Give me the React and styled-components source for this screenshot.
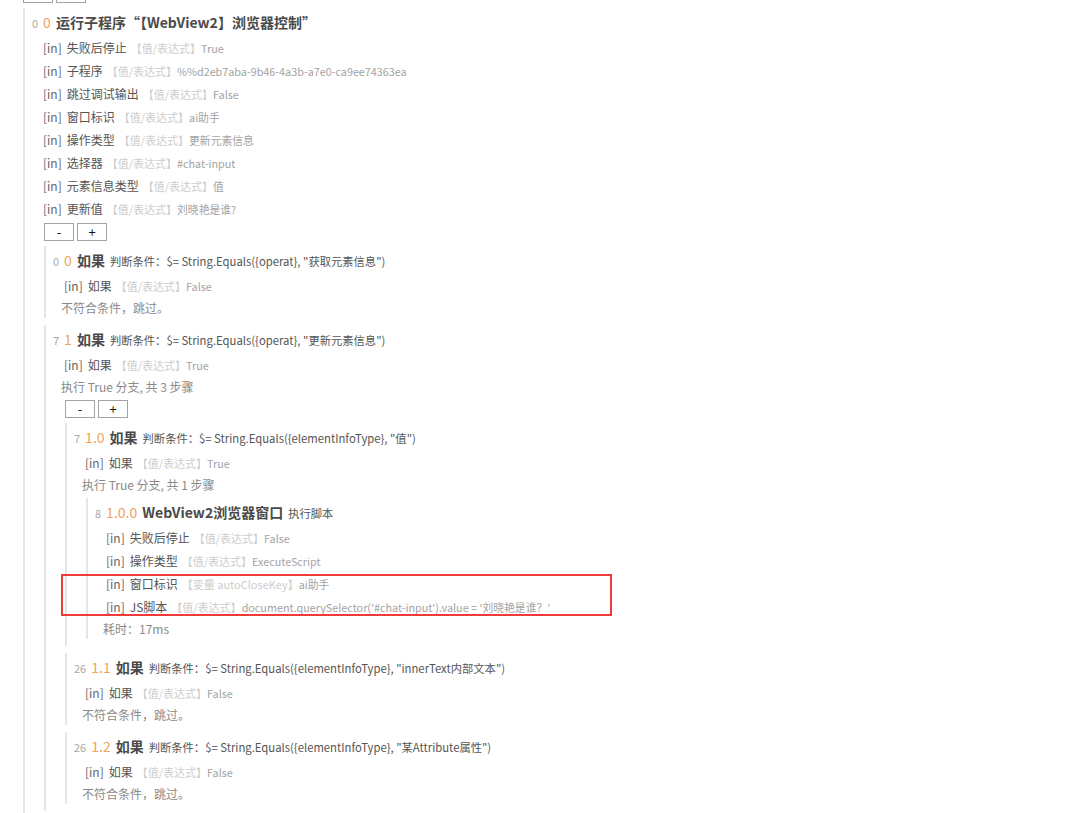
import React from "react";
import styled, { createGlobalStyle } from "styled-components";

const GlobalStyle = createGlobalStyle`
  html, body {
    margin: 0;
    padding: 0;
    background: #ffffff;
    overflow: hidden;
  }
  body {
    font-family: "Noto Sans CJK SC", "Noto Sans", sans-serif;
    color: #555;
  }
`;

const Page = styled.div`
  padding-left: 23px;
  margin-top: -15px;
  width: 1051px;
  height: 828px;
  overflow: hidden;
`;

const ButtonRow = styled.div`
  display: flex;
  gap: 3px;
  height: 18px;
  margin-bottom: 5px;
`;

const SmallButton = styled.button`
  box-sizing: border-box;
  width: 30px;
  height: 18px;
  padding: 0;
  margin: 0;
  border: 1px solid #a3a3a3;
  background: #ffffff;
  color: #111;
  font-family: "Noto Sans CJK SC", sans-serif;
  font-size: 13px;
  line-height: 16px;
  cursor: pointer;
`;

const BlockBox = styled.div`
  border-left: 2px solid #e6e6e6;
  padding-left: 7px;
  padding-top: ${(p) => (p.$root ? "1px" : "0")};
  margin-bottom: 7px;
`;

const Header = styled.div`
  display: flex;
  align-items: baseline;
  height: ${(p) => (p.$root ? "27px" : "28px")};
  line-height: ${(p) => (p.$root ? "27px" : "28px")};
  white-space: nowrap;
`;

const Index = styled.span`
  font-size: 11px;
  color: #a8a8a8;
  margin-right: 5px;
`;

const Step = styled.span`
  font-size: 14px;
  color: #eea35e;
  margin-right: 5px;
`;

const Title = styled.span`
  font-size: 14px;
  font-weight: 700;
  color: #4a4a4a;
`;

const Desc = styled.span`
  font-size: 11.3px;
  color: #555;
  margin-left: 5px;
`;

const ParamRow = styled.div`
  height: 23px;
  line-height: 23px;
  padding-left: 11px;
  white-space: nowrap;
  display: flex;
  align-items: baseline;
`;

const InTag = styled.span`
  font-size: 12px;
  color: #666;
  margin-right: 5px;
`;

const Label = styled.span`
  font-size: 12px;
  color: #555;
`;

const Kind = styled.span`
  font-size: 11px;
  color: #cdcdcd;
  margin-left: 4px;
`;

const Value = styled.span`
  font-size: 10.8px;
  color: #a3a3a3;
`;

const Status = styled.div`
  height: 21px;
  line-height: 21px;
  padding-left: 8px;
  font-size: 12px;
  color: #8a8a8a;
  white-space: nowrap;
`;

const Children = styled.div`
  display: flex;
  flex-direction: column;
  margin-left: 12px;
  margin-top: 3px;
`;

const Highlight = styled.div`
  position: relative;
`;

const HighlightFrame = styled.div`
  position: absolute;
  left: -34px;
  top: 2px;
  bottom: 2px;
  width: 551px;
  border: 2px solid #f03a3a;
  box-sizing: border-box;
  pointer-events: none;
`;

const p = (label, value, kind = "【值/表达式】", highlight = false) => ({
  label,
  value,
  kind,
  highlight,
});

const tree = {
  index: "0",
  step: "0",
  title: "运行子程序“【WebView2】浏览器控制”",
  params: [
    p("失败后停止", "True"),
    p("子程序", "%%d2eb7aba-9b46-4a3b-a7e0-ca9ee74363ea"),
    p("跳过调试输出", "False"),
    p("窗口标识", "ai助手"),
    p("操作类型", "更新元素信息"),
    p("选择器", "#chat-input"),
    p("元素信息类型", "值"),
    p("更新值", "刘晓艳是谁?"),
  ],
  buttons: true,
  children: [
    {
      index: "0",
      step: "0",
      title: "如果",
      desc: '判断条件：$= String.Equals({operat}, "获取元素信息")',
      params: [p("如果", "False")],
      status: ["不符合条件，跳过。"],
    },
    {
      index: "7",
      step: "1",
      title: "如果",
      desc: '判断条件：$= String.Equals({operat}, "更新元素信息")',
      params: [p("如果", "True")],
      status: ["执行 True 分支, 共 3 步骤"],
      buttons: true,
      children: [
        {
          index: "7",
          step: "1.0",
          title: "如果",
          desc: '判断条件：$= String.Equals({elementInfoType}, "值")',
          params: [p("如果", "True")],
          status: ["执行 True 分支, 共 1 步骤"],
          children: [
            {
              index: "8",
              step: "1.0.0",
              title: "WebView2浏览器窗口",
              desc: "执行脚本",
              params: [
                p("失败后停止", "False"),
                p("操作类型", "ExecuteScript"),
                p("窗口标识", "ai助手", "【变量 autoCloseKey】", true),
                p(
                  "JS脚本",
                  "document.querySelector('#chat-input').value = '刘晓艳是谁？'",
                  "【值/表达式】",
                  true
                ),
              ],
              tail: "耗时：17ms",
            },
          ],
        },
        {
          index: "26",
          step: "1.1",
          title: "如果",
          desc: '判断条件：$= String.Equals({elementInfoType}, "innerText内部文本")',
          params: [p("如果", "False")],
          status: ["不符合条件，跳过。"],
        },
        {
          index: "26",
          step: "1.2",
          title: "如果",
          desc: '判断条件：$= String.Equals({elementInfoType}, "某Attribute属性")',
          params: [p("如果", "False")],
          status: ["不符合条件，跳过。"],
        },
      ],
    },
  ],
};

function Param({ param }) {
  return (
    <ParamRow>
      <InTag>[in]</InTag>
      <Label>{param.label}</Label>
      <Kind>{param.kind}</Kind>
      <Value>{param.value}</Value>
    </ParamRow>
  );
}

function Params({ params }) {
  const groups = [];
  params.forEach((param) => {
    const last = groups[groups.length - 1];
    if (last && last.highlight === param.highlight) last.items.push(param);
    else groups.push({ highlight: param.highlight, items: [param] });
  });
  return groups.map((g, gi) =>
    g.highlight ? (
      <Highlight key={gi}>
        {g.items.map((param, i) => (
          <Param key={i} param={param} />
        ))}
        <HighlightFrame />
      </Highlight>
    ) : (
      g.items.map((param, i) => <Param key={`${gi}-${i}`} param={param} />)
    )
  );
}

function Controls() {
  return (
    <ButtonRow>
      <SmallButton>-</SmallButton>
      <SmallButton>+</SmallButton>
    </ButtonRow>
  );
}

function Block({ node, root }) {
  return (
    <BlockBox $root={root}>
      <Header $root={root}>
        <Index>{node.index}</Index>
        <Step>{node.step}</Step>
        <Title>{node.title}</Title>
        {node.desc && <Desc>{node.desc}</Desc>}
      </Header>
      <Params params={node.params} />
      {node.status &&
        node.status.map((s, i) => <Status key={i}>{s}</Status>)}
      {node.tail && <Status>{node.tail}</Status>}
      {(node.buttons || node.children) && (
        <Children>
          {node.buttons && <Controls />}
          {node.children &&
            node.children.map((c, i) => <Block key={i} node={c} />)}
        </Children>
      )}
    </BlockBox>
  );
}

export default function App() {
  return (
    <>
      <GlobalStyle />
      <Page>
        <Controls />
        <Block node={tree} root />
      </Page>
    </>
  );
}
